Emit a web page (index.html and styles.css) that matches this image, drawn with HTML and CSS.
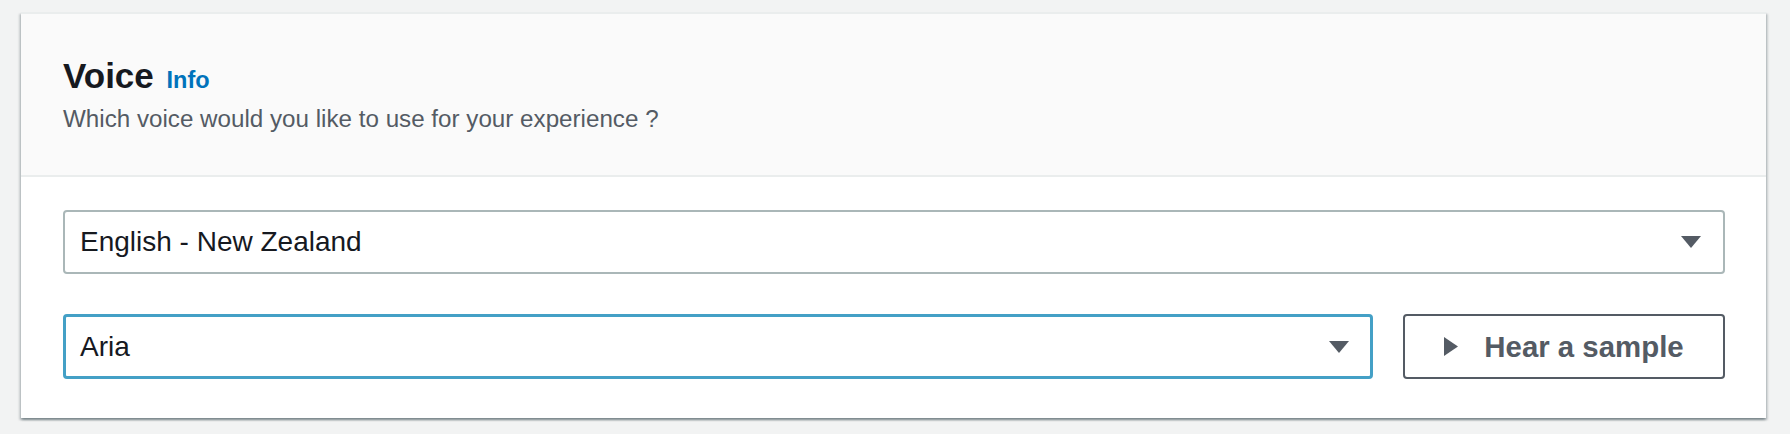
FILE: index.html
```html
<!DOCTYPE html>
<html lang="en">
<head>
<meta charset="utf-8">
<title>Voice</title>
<link rel="stylesheet" href="styles.css">
</head>
<body>
<section class="card">
  <header class="card-header">
    <h2 class="title">Voice <a class="info" href="#">Info</a></h2>
    <p class="subtitle">Which voice would you like to use for your experience ?</p>
  </header>
  <div class="card-body">
    <div class="select">
      <span class="select-value">English - New Zealand</span>
      <svg class="caret" width="20" height="12" viewBox="0 0 20 12"><polygon points="0,0 20,0 10,12" fill="#545b64"/></svg>
    </div>
    <div class="row">
      <div class="select select-focus">
        <span class="select-value">Aria</span>
        <svg class="caret" width="20" height="12" viewBox="0 0 20 12"><polygon points="0,0 20,0 10,12" fill="#545b64"/></svg>
      </div>
      <button class="btn" type="button">
        <svg class="play" width="14" height="19" viewBox="0 0 14 19"><polygon points="0,0 14,9.5 0,19" fill="#545b64"/></svg>
        <span>Hear a sample</span>
      </button>
    </div>
  </div>
</section>
</body>
</html>
```

FILE: styles.css
```css
html, body {
  margin: 0;
  padding: 0;
}
body {
  background: #f2f3f3;
  font-family: "Liberation Sans", Arial, Helvetica, sans-serif;
  padding: 12px 24px 16px 21px;
}
.card {
  background: #ffffff;
  border-top: 2px solid #eaeded;
  box-shadow: 0 2px 2px 0 rgba(0, 28, 36, 0.3), 2px 2px 2px 0 rgba(0, 28, 36, 0.15), -2px 2px 2px 0 rgba(0, 28, 36, 0.15);
  display: flex;
  flex-direction: column;
}
.card-header {
  background: #fafafa;
  border-bottom: 2px solid #eaeded;
  padding: 42px 42px 40px 42px;
}
.title {
  margin: 0;
  font-size: 35px;
  line-height: 40px;
  font-weight: 700;
  color: #16191f;
}
.info {
  font-size: 23.5px;
  font-weight: 700;
  color: #0073bb;
  text-decoration: none;
  margin-left: 3px;
}
.subtitle {
  margin: 3px 0 0 0;
  font-size: 24.2px;
  line-height: 32px;
  color: #545b64;
}
.card-body {
  padding: 33px 41px 39px 42px;
  display: flex;
  flex-direction: column;
  gap: 40px;
}
.select {
  box-sizing: border-box;
  height: 64px;
  border: 2px solid #aab7b8;
  border-radius: 4px;
  display: flex;
  align-items: center;
  justify-content: space-between;
  padding: 0 22px 0 15px;
  background: #fff;
}
.select-value {
  font-size: 28px;
  color: #16191f;
}
.select-focus {
  flex: 1;
  height: 65px;
  border: 3px solid #44a0c6;
  padding: 0 21px 0 14px;
}
.row {
  display: flex;
  gap: 30px;
}
.btn {
  box-sizing: border-box;
  width: 322px;
  height: 65px;
  border: 2px solid #545b64;
  border-radius: 4px;
  background: #fff;
  display: flex;
  align-items: center;
  justify-content: center;
  gap: 26px;
  font-family: inherit;
  font-size: 29.4px;
  font-weight: 700;
  color: #545b64;
  padding: 0;
}
.play {
  display: block;
}
.caret {
  display: block;
}
```
